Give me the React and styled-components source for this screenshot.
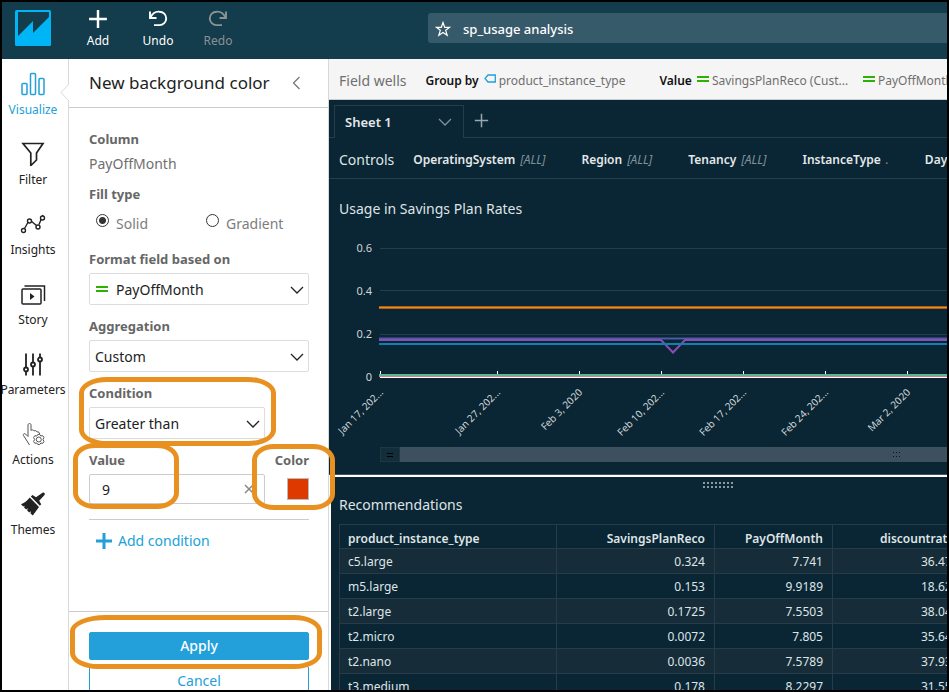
import React from "react";
import styled, { createGlobalStyle, css } from "styled-components";

const GlobalStyle = createGlobalStyle`
  *, *::before, *::after { box-sizing: border-box; }
  html, body { margin: 0; height: 100%; }
  body { overflow: hidden; }
  body, button, input, select {
    font-family: "Noto Sans", "Open Sans", sans-serif;
  }
  button { background: none; border: 0; padding: 0; margin: 0; color: inherit; cursor: pointer; }
`;

const navy = "#0a2533";
const line = "#263d49";
const blue = "#239fd9";

const Frame = styled.div`
  height: 100vh;
  display: flex;
  flex-direction: column;
  border: 2px solid #000;
  overflow: hidden;
  background: #fff;
`;

/* Top bar */
const TopBar = styled.header`
  flex: none;
  height: 57px;
  display: flex;
  align-items: flex-start;
  background: #133c4c;
  color: #fff;
`;
const Logo = styled.a`
  display: block;
  margin: 8px 17px 0 13px;
  height: 36px;
`;
const ToolButton = styled.button`
  width: 60px;
  padding-top: 7px;
  display: flex;
  flex-direction: column;
  align-items: center;
  gap: 2px;
  font-size: 12px;
  line-height: 20px;
  color: #fff;
  &:disabled { color: #8d9193; cursor: default; }
`;
const TitleBox = styled.div`
  flex: 1;
  height: 30px;
  margin: 11px 0 0 180px;
  padding: 1px 0 0 7px;
  display: flex;
  align-items: center;
  gap: 12px;
  background: #365a69;
  border-radius: 3px 0 0 3px;
  font-size: 13px;
  line-height: 20px;
  h1 { margin: 0; font-size: inherit; font-weight: 500; }
  button { display: flex; }
`;

const Body = styled.div`
  flex: 1;
  min-height: 0;
  display: flex;
`;

/* Left rail */
const Rail = styled.nav`
  flex: none;
  width: 67px;
  border-right: 1px solid #d9d9d9;
`;
const RailButton = styled.button`
  position: relative;
  width: 100%;
  height: 70px;
  padding-top: 10px;
  display: flex;
  flex-direction: column;
  align-items: center;
  gap: 4px;
  font-size: 12px;
  line-height: 20px;
  margin-left: -2px;
  color: ${(p) => (p.$active ? blue : "#222")};
  & > svg:first-child { flex: none; }
`;
const Pointer = styled.svg`
  position: absolute;
  top: 24px;
  right: -3px;
`;

/* Format panel */
const Panel = styled.aside`
  position: relative;
  z-index: 1;
  flex: none;
  width: 260px;
  display: flex;
  flex-direction: column;
  border-right: 1px solid #d5d9da;
  background: #fff;
  font-size: 14px;
  line-height: 20px;
`;
const PanelHeader = styled.div`
  flex: none;
  height: 49px;
  padding: 0 26px 0 20px;
  display: flex;
  align-items: center;
  justify-content: space-between;
  border-bottom: 1px solid #ccc;
  h2 { margin: 0; font-size: 17px; font-weight: 400; line-height: 24px; color: #222; }
  button { display: flex; }
`;
const PanelBody = styled.form`
  flex: none;
  height: 503px;
  padding: 21px 19px 0 20px;
  display: flex;
  flex-direction: column;
`;
const labelStyle = css`
  display: block;
  height: 20px;
  padding: 0;
  font-size: 13px;
  font-weight: 700;
  color: #666;
  white-space: nowrap;
`;
const Label = styled.label`${labelStyle}`;
const Plain = styled.div`color: #6f6f6f;`;
const Block = styled.div`
  display: flex;
  flex-direction: column;
  gap: 5px;
  margin-bottom: 10px;
`;
const FillSet = styled.fieldset`
  border: 0;
  margin: 0 0 15px;
  padding: 0;
  legend { ${labelStyle} }
`;
const RadioRow = styled.div`
  display: flex;
  padding: 10px 0 0 7px;
`;
const RadioLabel = styled.label`
  width: 110px;
  display: flex;
  align-items: flex-start;
  gap: 7px;
  color: #7d7d7d;
`;
const Radio = styled.input`
  appearance: none;
  width: 13px;
  height: 13px;
  margin: 0;
  border: 1px solid #333;
  border-radius: 50%;
  background: #fff;
  &:checked { background: radial-gradient(circle, #333 0 3px, #fff 4px); }
`;
const Field = styled.div`
  position: relative;
  width: ${(p) => (p.$narrow ? "176px" : "auto")};
  display: flex;
  flex-direction: column;
  gap: 4px;
  margin-bottom: ${(p) => (p.$last ? "0" : "11px")};
`;
const SelectBox = styled.div`
  display: grid;
  grid-template-columns: 20px 1fr 24px;
  align-items: center;
  height: 32px;
  border: 1px solid #ddd;
  border-radius: 2px;
  color: #222;
  select {
    grid-area: 1 / 1 / 2 / 4;
    appearance: none;
    width: 100%;
    height: 30px;
    margin: 0;
    padding: 0 24px 0 ${(p) => (p.$icon ? "26px" : "5px")};
    border: 0;
    background: transparent;
    font-size: 14px;
    color: #222;
  }
  svg { pointer-events: none; }
  & > svg:first-of-type { grid-area: 1 / 3; justify-self: end; margin: 2px 4px 0 0; }
  & > svg:nth-of-type(2) { grid-area: 1 / 1; justify-self: end; margin-right: 2px; }
`;
const ValueRow = styled.div`
  display: flex;
  justify-content: space-between;
  height: 54px;
`;
const ValueInput = styled.div`
  flex: none;
  display: flex;
  align-items: center;
  height: 30px;
  padding-right: 10px;
  border: 1px solid #ccc;
  border-radius: 2px;
  input {
    flex: 1;
    min-width: 0;
    padding: 0 0 0 12px;
    border: 0;
    font-size: 14px;
    color: #222;
    background: transparent;
  }
  button { display: flex; }
`;
const ColorField = styled.div`
  position: relative;
  width: 36px;
  display: flex;
  flex-direction: column;
  align-items: flex-end;
  gap: 8px;
`;
const Swatch = styled.button`
  width: 22px;
  height: 22px;
  border: 1px solid #bbb;
  background: #de3a00;
`;
const AddCondition = styled.button`
  margin-top: 15px;
  padding: 10px 0 0 6px;
  border-top: 1px solid #ccc;
  display: flex;
  align-items: center;
  gap: 5px;
  font-size: 14px;
  line-height: 22px;
  color: ${blue};
`;
const PanelFooter = styled.div`
  flex: none;
  padding: 20px 19px 0 20px;
  border-top: 1px solid #ccc;
  display: flex;
  flex-direction: column;
  gap: 6px;
`;
const ApplyWrap = styled.div`
  position: relative;
  z-index: 1;
  display: flex;
`;
const ActionButton = styled.button`
  flex: 1 0 auto;
  height: ${(p) => (p.$primary ? "28px" : "30px")};
  border: 1px solid ${blue};
  border-radius: 2px;
  background: ${(p) => (p.$primary ? blue : "#fff")};
  color: ${(p) => (p.$primary ? "#fff" : blue)};
  font-size: 14px;
  line-height: 20px;
  font-weight: ${(p) => (p.$primary ? 500 : 400)};
`;
/* Highlight drawn over the controls */
const Ring = styled.span`
  position: absolute;
  inset: ${(p) => p.$inset};
  border: 5px solid #e99120;
  border-radius: ${(p) => p.$radius || "22px / 16px"};
  pointer-events: none;
`;

/* Workspace */
const Main = styled.main`
  flex: 1;
  min-width: 0;
  display: flex;
  flex-direction: column;
  overflow: hidden;
  background: ${navy};
  color: #dfe4e6;
`;
const Wells = styled.div`
  flex: none;
  height: 41px;
  padding: 3px 0 0 10px;
  display: flex;
  align-items: center;
  gap: 19px;
  background: #f5f5f5;
  border-bottom: 1px solid #ccc;
  color: #6f6f6f;
  font-size: 12px;
  white-space: nowrap;
  overflow: hidden;
`;
const WellsTitle = styled.span`font-size: 14px;`;
const Well = styled.div`
  flex: none;
  min-width: ${(p) => (p.$wide ? "0" : "215px")};
  display: flex;
  align-items: center;
  gap: 5px;
  strong { color: #111; font-weight: 600; }
`;
const WellField = styled.button`
  display: flex;
  align-items: center;
  gap: 3px;
  min-width: ${(p) => (p.$measure ? "161px" : "0")};
  font-size: 12px;
  svg { margin-bottom: 3px; }
`;
const Tabs = styled.div`
  flex: none;
  height: 38px;
  display: flex;
  align-items: flex-end;
  &::before { content: ""; width: 5px; border-bottom: 1px solid ${line}; }
`;
const Tab = styled.button`
  width: 130px;
  height: 33px;
  padding: 0 11px 0 10px;
  display: flex;
  align-items: center;
  justify-content: space-between;
  border: 1px solid ${line};
  border-bottom: 0;
  font-size: 13px;
  font-weight: 600;
  color: #e4e8ea;
`;
const TabRest = styled.div`
  flex: 1;
  height: 33px;
  padding: 0 0 1px 10px;
  display: flex;
  align-items: center;
  border-bottom: 1px solid ${line};
  button { display: flex; }
`;
const Controls = styled.div`
  flex: none;
  height: 41px;
  padding: 2px 0 0 10px;
  display: flex;
  align-items: center;
  gap: 36px;
  border-bottom: 1px solid ${line};
  white-space: nowrap;
  overflow: hidden;
`;
const ControlsTitle = styled.span`
  margin-right: -17px;
  font-size: 14px;
`;
const Control = styled.button`
  flex: none;
  display: flex;
  gap: 5px;
  font-size: 12px;
  color: #e4e8ea;
  font-weight: 600;
  em { font-weight: 400; color: #7f929b; }
`;
const VisualTitle = styled.h3`
  margin: 0;
  padding-left: ${(p) => (p.$inset ? "8px" : "10px")};
  font-size: 14px;
  font-weight: 400;
  line-height: 20px;
`;
const ChartVisual = styled.section`
  flex: none;
  padding-top: 20px;
  svg { display: block; }
`;
const Plot = styled.svg`
  margin-top: 10px;
`;
const RangeBar = styled.div`
  display: flex;
  height: 15px;
  margin: 0 0 13px 51px;
  background: #3c515d;
`;
const RangeStart = styled.div`
  width: 20px;
  display: flex;
  align-items: center;
  justify-content: center;
  background: #132d3a;
  border: 1px solid #1d3743;
`;
const RangeFill = styled.div`
  flex: 1;
  display: flex;
  align-items: center;
  justify-content: flex-end;
  padding-right: 47px;
`;
const TableVisual = styled.section`
  flex: 1;
  min-height: 0;
  overflow: hidden;
  border-top: 2px solid #fff;
  border-left: 2px solid #fff;
  box-shadow: 0 -1px 0 #43545e;
`;
const Grip = styled.div`
  display: flex;
  height: 18px;
  padding: 5px 0 0 372px;
`;
const Table = styled.table`
  table-layout: fixed;
  width: 740px;
  margin: 9px 0 0 8px;
  border-collapse: collapse;
  font-size: 12px;
  line-height: 20px;
  th, td {
    height: 25px;
    padding: 1px 9px 0 8px;
    border: 1px solid ${line};
    text-align: right;
    white-space: nowrap;
    overflow: hidden;
  }
  th { height: 24px; padding-top: 4px; line-height: 18px; font-weight: 600; }
  th:first-child, td:first-child, th:last-child, td:last-child { text-align: left; }
  th:last-child { padding-left: 47px; }
  td:last-child { padding-left: 88px; }
  tbody tr:nth-child(odd) { background: #162c39; }
`;

/* Icons */
const stroke = { fill: "none", stroke: "currentColor" };

const Chevron = ({ color = "#222" }) => (
  <svg width="14" height="8" viewBox="0 0 14 8" fill="none" stroke={color} strokeWidth="1.3">
    <path d="M1 1l6 6 6-6" />
  </svg>
);
const Measure = () => (
  <svg width="12" height="7" viewBox="0 0 12 7" fill="#2db200">
    <path d="M0 0h12v2H0zM0 4h12v2H0z" />
  </svg>
);
const Dimension = () => (
  <svg width="12" height="10" viewBox="0 0 12 10" fill="none" stroke={blue} strokeWidth="1.3">
    <path d="M4 1h7.300v7H4L1 4.500z" />
  </svg>
);
const Plus = ({ size, width, color = "currentColor" }) => (
  <svg width={size} height={size} viewBox="0 0 18 18" fill="none" stroke={color} strokeWidth={width}>
    <path d="M9 1v16M1 9h16" />
  </svg>
);
const UndoIcon = ({ flip }) => (
  <svg width="20" height="20" viewBox="0 0 20 20" {...stroke} strokeWidth="1.900">
    <g transform={flip ? "translate(20 0) scale(-1 1)" : undefined}>
      <path d="M2 2.500V9h6.500" />
      <path d="M2.500 8.500C4.500 4.500 8 2.300 11.500 2.700a6.700 6.700 0 0 1 0 13.400H6" />
    </g>
  </svg>
);

const railIcons = {
  Visualize: (
    <g {...stroke} strokeWidth="1.500">
      <rect x="2" y="14" width="5" height="11" rx="1" />
      <rect x="10.500" y="4" width="5" height="21" rx="1" />
      <rect x="19" y="9" width="5" height="16" rx="1" />
    </g>
  ),
  Filter: (
    <path {...stroke} strokeWidth="1.700" d="M3 4h20l-6.500 9.500v7L10.800 26V13.500z" />
  ),
  Insights: (
    <g {...stroke} strokeWidth="1.400">
      <path d="M4.500 19L8.500 12M11 11.500l5.500 4.500M19 15l4-9.500" />
      <circle cx="3.500" cy="21" r="2" />
      <circle cx="9.500" cy="11.500" r="2" fill="#fff" />
      <circle cx="18" cy="17.500" r="2" fill="#fff" />
      <circle cx="22.500" cy="8.500" r="2" fill="#fff" />
    </g>
  ),
  Story: (
    <g {...stroke} strokeWidth="1.500">
      <path d="M4.500 6.500h20v15" />
      <rect x="2" y="9.500" width="19" height="15" rx="1" />
      <path d="M10 13.500v7l4.500-3.500z" fill="currentColor" stroke="none" />
    </g>
  ),
  Parameters: (
    <g {...stroke} strokeWidth="1.800">
      <path d="M6 4v13.500M6 22v4M13 4v9M13 17.500v8.500M20 4v3.500M20 12v14" />
      <circle cx="6" cy="20" r="2" />
      <circle cx="13" cy="15" r="2" />
      <circle cx="20" cy="10" r="2" />
    </g>
  ),
  Actions: (
    <g {...stroke} strokeWidth="1" stroke="#555">
      <path d="M9.500 25.500L7 21.500 3.500 16c-.8-1.500 1-2.500 2.200-1.300L8 17V5.500c0-2 3-2 3 0V11c1-1 2.500-.8 3 .5 1.200-.8 2.600-.3 3 1 1.500-.5 2.500.3 2.500 2" />
      <path d="M16.800 16.500l1-1.500h2l1 1.500 2-.3 1.200 1.800-1 2 1 2-1.200 1.800-2-.3-1 1.500h-2l-1-1.500-2 .3-1.200-1.800 1-2-1-2 1.200-1.800z" />
      <circle cx="18.800" cy="20" r="2.500" />
    </g>
  ),
  Themes: (
    <g fill="currentColor">
      <path d="M22.500 3.300c1.500-.9 3 .7 2 2.100l-5.300 5.800 2 3.500-1.300 1.600L10.800 6.900 12.500 5.500l3.500 2.300z" />
      <path d="M9.800 8l9.200 9.500-6.200 8.500-2.300-2 .4-2.200-1.700 1.300-2-2 .6-2.300-1.700 1.300-2-2 .5-1.900-1.400.9L1 14.700C4.700 13.300 7.500 11 9.800 8z" />
    </g>
  ),
};

const railItems = ["Visualize", "Filter", "Insights", "Story", "Parameters", "Actions", "Themes"];

const controls = [
  ["OperatingSystem", "[ALL]"],
  ["Region", "[ALL]"],
  ["Tenancy", "[ALL]"],
  ["InstanceType", "."],
  ["Days", ""],
];

const rows = [
  ["c5.large", "0.324", "7.741", "36.47"],
  ["m5.large", "0.153", "9.9189", "18.62"],
  ["t2.large", "0.1725", "7.5503", "38.04"],
  ["t2.micro", "0.0072", "7.805", "35.64"],
  ["t2.nano", "0.0036", "7.5789", "37.93"],
  ["t3.medium", "0.178", "8.2297", "31.55"],
];

const ticks = [
  [51, "Jan 17, 202..."],
  [168, "Jan 27, 202..."],
  [250, "Feb 3, 2020"],
  [332, "Feb 10, 202..."],
  [414, "Feb 17, 202..."],
  [496, "Feb 24, 202..."],
  [578, "Mar 2, 2020"],
];
const levels = [[19, "0.6"], [62, "0.4"], [105, "0.2"], [148, "0"]];

function UsageChart() {
  return (
    <Plot width="100%" height="218" role="img" aria-label="Usage in Savings Plan Rates">
      <g fontFamily="Noto Sans, sans-serif" fill="#cfd6d9" textAnchor="end">
        {levels.map(([y, text]) => (
          <text key={text} x="43" y={y + 4} fontSize="11">{text}</text>
        ))}
        {ticks.map(([x, text]) => (
          <text key={text} fontSize="10" transform={`translate(${x + 4} 164) rotate(-45)`}>{text}</text>
        ))}
      </g>
      <g fill="none">
        <path d="M51 19.500H3000M51 61.500H3000M51 105.500H3000" stroke={line} />
        <path d="M50 78.500H3000" stroke="#a8611b" strokeWidth="3" />
        <path d="M50 78.500H3000" stroke="#f58a12" strokeWidth="1" />
        <path d="M50 109.500H3000" stroke="#4a5ba8" strokeWidth="2" />
        <path d="M50 111H332L344 123.500L356 111H3000" stroke="#8c4bb5" strokeWidth="2" />
        <path d="M50 115H3000" stroke="#1180b0" strokeWidth="2" />
        <path d="M50 146H3000" stroke="#5cb59b" strokeWidth="2" />
        <path d="M50 147.500H3000" stroke="#e37c80" />
        <path d="M51 148.500H3000" stroke="#fff" />
        {ticks.map(([x]) => (
          <path key={x} d={`M${x + 0.5} 142v3`} stroke="#fff" />
        ))}
      </g>
    </Plot>
  );
}

export default function App() {
  return (
    <>
      <GlobalStyle />
      <Frame>
        <TopBar>
          <Logo href="#" aria-label="Home">
            <svg width="36" height="36" viewBox="0 0 36 36">
              <rect width="36" height="36" rx="1.500" fill="#00b5f5" />
              <path d="M3 2h31v5L18 23V11L3 26z" fill="#133c4c" />
            </svg>
          </Logo>
          <ToolButton>
            <Plus size={20} width={2.2} />
            Add
          </ToolButton>
          <ToolButton>
            <UndoIcon />
            Undo
          </ToolButton>
          <ToolButton disabled>
            <UndoIcon flip />
            Redo
          </ToolButton>
          <TitleBox>
            <button aria-label="Favorite">
              <svg width="16" height="16" viewBox="0 0 16 16" {...stroke} strokeWidth="1.200">
                <path d="M8 1.500l1.700 4.800h5L10.700 9.300l1.500 5L8 11.400l-4.200 2.900 1.500-5L1.300 6.300h5z" />
              </svg>
            </button>
            <h1>sp_usage analysis</h1>
          </TitleBox>
        </TopBar>
        <Body>
          <Rail>
            {railItems.map((name, i) => (
              <RailButton key={name} $active={i === 0}>
                <svg width="26" height="27" viewBox="0 0 26 26">{railIcons[name]}</svg>
                {name}
                {i === 0 && (
                  <Pointer width="9" height="20" viewBox="0 0 9 20">
                    <path d="M9 1L1 9.500 9 18" fill="#fff" stroke="#d9d9d9" />
                  </Pointer>
                )}
              </RailButton>
            ))}
          </Rail>
          <Panel>
            <PanelHeader>
              <h2>New background color</h2>
              <button aria-label="Back">
                <svg width="10" height="14" viewBox="0 0 10 14" fill="none" stroke="#777" strokeWidth="1.300">
                  <path d="M7.500 1L1.500 7l6 6" />
                </svg>
              </button>
            </PanelHeader>
            <PanelBody onSubmit={(e) => e.preventDefault()}>
              <Block>
                <Label as="div">Column</Label>
                <Plain>PayOffMonth</Plain>
              </Block>
              <FillSet>
                <legend>Fill type</legend>
                <RadioRow>
                  <RadioLabel>
                    <Radio type="radio" name="fill" defaultChecked />
                    Solid
                  </RadioLabel>
                  <RadioLabel>
                    <Radio type="radio" name="fill" />
                    Gradient
                  </RadioLabel>
                </RadioRow>
              </FillSet>
              <Field>
                <Label htmlFor="field">Format field based on</Label>
                <SelectBox $icon>
                  <select id="field"><option>PayOffMonth</option></select>
                  <Chevron />
                  <Measure />
                </SelectBox>
              </Field>
              <Field>
                <Label htmlFor="aggregation">Aggregation</Label>
                <SelectBox>
                  <select id="aggregation"><option>Custom</option></select>
                  <Chevron />
                </SelectBox>
              </Field>
              <Field $narrow>
                <Label htmlFor="condition">Condition</Label>
                <SelectBox>
                  <select id="condition"><option>Greater than</option></select>
                  <Chevron />
                </SelectBox>
                <Ring $inset="-6px -11px -7px -10px" $radius="28px / 16px" />
              </Field>
              <ValueRow>
                <Field $narrow $last>
                  <Label htmlFor="value">Value</Label>
                  <ValueInput>
                    <input id="value" defaultValue="9" />
                    <button type="button" aria-label="Clear">
                      <svg width="10" height="10" viewBox="0 0 10 10" fill="none" stroke="#888" strokeWidth="1.500">
                        <path d="M1 1l8 8M9 1L1 9" />
                      </svg>
                    </button>
                  </ValueInput>
                  <Ring $inset="-7px 86px -5px -16px" />
                </Field>
                <ColorField>
                  <Label htmlFor="color">Color</Label>
                  <Swatch id="color" type="button" />
                  <Ring $inset="-6px -26px -6px -21px" />
                </ColorField>
              </ValueRow>
              <AddCondition type="button">
                <Plus size={18} width={3} />
                Add condition
              </AddCondition>
            </PanelBody>
            <PanelFooter>
              <ApplyWrap>
                <ActionButton $primary>Apply</ActionButton>
                <Ring $inset="-17px -13px -9px -19px" $radius="36px 28px 28px 28px / 16px" />
              </ApplyWrap>
              <ActionButton>Cancel</ActionButton>
            </PanelFooter>
          </Panel>
          <Main>
            <Wells>
              <WellsTitle>Field wells</WellsTitle>
              <Well>
                <strong>Group by</strong>
                <WellField><Dimension />product_instance_type</WellField>
              </Well>
              <Well $wide>
                <strong>Value</strong>
                <WellField $measure><Measure />SavingsPlanReco (Cust...</WellField>
                <WellField $measure><Measure />PayOffMonth</WellField>
              </Well>
            </Wells>
            <Tabs>
              <Tab>Sheet 1<Chevron color="#7f929b" /></Tab>
              <TabRest>
                <button aria-label="Add sheet"><Plus size={15} width={1.8} color="#9aa8ae" /></button>
              </TabRest>
            </Tabs>
            <Controls>
              <ControlsTitle>Controls</ControlsTitle>
              {controls.map(([name, value]) => (
                <Control key={name}>{name}<em>{value}</em></Control>
              ))}
            </Controls>
            <ChartVisual>
              <VisualTitle>Usage in Savings Plan Rates</VisualTitle>
              <UsageChart />
              <RangeBar>
                <RangeStart>
                  <svg width="6" height="4"><path d="M0 .5h6M0 3.500h6" stroke="#000" /></svg>
                </RangeStart>
                <RangeFill>
                  <svg width="7" height="5" fill="#06141c">
                    {[0, 3, 6].map((x) => (
                      <path key={x} d={`M${x} 0h1v1h-1zM${x} 4h1v1h-1z`} />
                    ))}
                  </svg>
                </RangeFill>
              </RangeBar>
            </ChartVisual>
            <TableVisual>
              <Grip>
                <svg width="31" height="6" fill="#8b99a0">
                  {[0, 4, 8, 12, 16, 20, 24, 28].map((x) => (
                    <path key={x} d={`M${x} 0h2v2h-2zM${x} 4h2v2h-2z`} />
                  ))}
                </svg>
              </Grip>
              <VisualTitle $inset>Recommendations</VisualTitle>
              <Table>
                <colgroup>
                  <col style={{ width: 217 }} />
                  <col style={{ width: 158 }} />
                  <col style={{ width: 118 }} />
                  <col />
                </colgroup>
                <thead>
                  <tr>
                    <th>product_instance_type</th>
                    <th>SavingsPlanReco</th>
                    <th>PayOffMonth</th>
                    <th>discountrate</th>
                  </tr>
                </thead>
                <tbody>
                  {rows.map((row) => (
                    <tr key={row[0]}>
                      {row.map((cell, i) => <td key={i}>{cell}</td>)}
                    </tr>
                  ))}
                </tbody>
              </Table>
            </TableVisual>
          </Main>
        </Body>
      </Frame>
    </>
  );
}
